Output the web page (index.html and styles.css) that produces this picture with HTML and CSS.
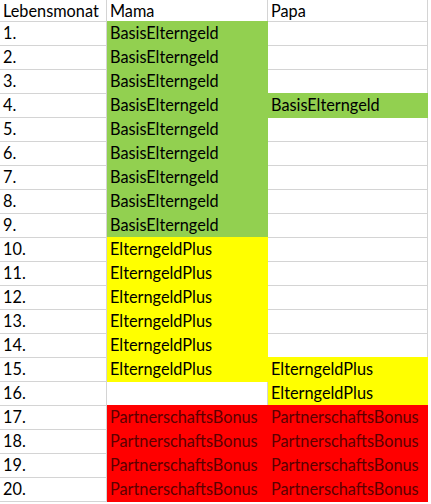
FILE: index.html
```html
<!DOCTYPE html>
<html>
<head>
<meta charset="utf-8">
<link rel="stylesheet" href="styles.css">
</head>
<body>
<div class="sheet">
  <div class="c hdr">Lebensmonat</div><div class="c hdr">Mama</div><div class="c hdr">Papa</div>
  <div class="c">1.</div><div class="c g">BasisElterngeld</div><div class="c"></div>
  <div class="c">2.</div><div class="c g">BasisElterngeld</div><div class="c"></div>
  <div class="c">3.</div><div class="c g">BasisElterngeld</div><div class="c"></div>
  <div class="c">4.</div><div class="c g">BasisElterngeld</div><div class="c g">BasisElterngeld</div>
  <div class="c">5.</div><div class="c g">BasisElterngeld</div><div class="c"></div>
  <div class="c">6.</div><div class="c g">BasisElterngeld</div><div class="c"></div>
  <div class="c">7.</div><div class="c g">BasisElterngeld</div><div class="c"></div>
  <div class="c">8.</div><div class="c g">BasisElterngeld</div><div class="c"></div>
  <div class="c">9.</div><div class="c g">BasisElterngeld</div><div class="c"></div>
  <div class="c">10.</div><div class="c y">ElterngeldPlus</div><div class="c"></div>
  <div class="c">11.</div><div class="c y">ElterngeldPlus</div><div class="c"></div>
  <div class="c">12.</div><div class="c y">ElterngeldPlus</div><div class="c"></div>
  <div class="c">13.</div><div class="c y">ElterngeldPlus</div><div class="c"></div>
  <div class="c">14.</div><div class="c y">ElterngeldPlus</div><div class="c"></div>
  <div class="c">15.</div><div class="c y">ElterngeldPlus</div><div class="c y">ElterngeldPlus</div>
  <div class="c">16.</div><div class="c"></div><div class="c y">ElterngeldPlus</div>
  <div class="c">17.</div><div class="c r">PartnerschaftsBonus</div><div class="c r">PartnerschaftsBonus</div>
  <div class="c">18.</div><div class="c r">PartnerschaftsBonus</div><div class="c r">PartnerschaftsBonus</div>
  <div class="c">19.</div><div class="c r">PartnerschaftsBonus</div><div class="c r">PartnerschaftsBonus</div>
  <div class="c">20.</div><div class="c r">PartnerschaftsBonus</div><div class="c r">PartnerschaftsBonus</div>
</div>
</body>
</html>
```
FILE: styles.css
```css
html, body {
  margin: 0;
  padding: 0;
  background: #ffffff;
}
.sheet {
  display: grid;
  grid-template-columns: 107px 161px 160px;
  grid-template-rows: 22px repeat(20, 24px);
  font-family: Lato, "Open Sans", sans-serif;
  font-size: 16.3px;
  color: #000000;
}
.c {
  box-sizing: border-box;
  border-right: 1px solid #d4d4d4;
  border-bottom: 1px solid #d4d4d4;
  padding: 0 0 1px 3px;
  line-height: 22px;
  white-space: nowrap;
  overflow: hidden;
}
.hdr {
  line-height: 21px;
  padding-bottom: 0;
}
.g {
  background: #92d050;
  border-color: #92d050;
  box-shadow: 0 -1px 0 #92d050;
}
.y {
  background: #ffff00;
  border-color: #ffff00;
  box-shadow: 0 -1px 0 #ffff00;
}
.r {
  background: #ff0000;
  border-color: #ff0000;
  box-shadow: 0 -1px 0 #ff0000;
  color: #5c0000;
}
```
